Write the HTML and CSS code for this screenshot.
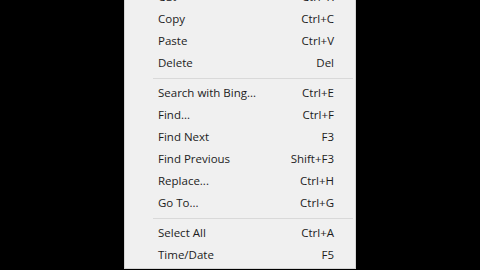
FILE: index.html
```html
<!DOCTYPE html>
<html lang="en">
<head>
    <meta charset="UTF-8">
    <title>Edit menu</title>
    <link rel="stylesheet" href="styles.css">
</head>
<body>
    <div class="menu">
        <div class="item"><span>Cut</span><span>Ctrl+X</span></div>
        <div class="item"><span>Copy</span><span>Ctrl+C</span></div>
        <div class="item"><span>Paste</span><span>Ctrl+V</span></div>
        <div class="item"><span>Delete</span><span>Del</span></div>
        <div class="sep"></div>
        <div class="item"><span>Search with Bing...</span><span>Ctrl+E</span></div>
        <div class="item"><span>Find...</span><span>Ctrl+F</span></div>
        <div class="item"><span>Find Next</span><span>F3</span></div>
        <div class="item"><span>Find Previous</span><span>Shift+F3</span></div>
        <div class="item"><span>Replace...</span><span>Ctrl+H</span></div>
        <div class="item"><span>Go To...</span><span>Ctrl+G</span></div>
        <div class="sep"></div>
        <div class="item"><span>Select All</span><span>Ctrl+A</span></div>
        <div class="item"><span>Time/Date</span><span>F5</span></div>
    </div>
</body>
</html>
```

FILE: styles.css
```css
html, body {
    margin: 0;
    height: 100%;
    background: #000;
    overflow: hidden;
}
.menu {
    width: 230px;
    margin: -14px 0 0 124px;
    padding-bottom: 2px;
    background: #f0f0f0;
    border: 1px solid #d4d4d4;
    border-top: none;
    font-family: "Open Sans", "Noto Sans", sans-serif;
    font-size: 11.5px;
    color: #1c1c1c;
}
.item {
    display: flex;
    justify-content: space-between;
    align-items: center;
    box-sizing: border-box;
    height: 22px;
    padding: 0 21px 2px 33px;
}
.sep {
    height: 1px;
    margin: 4px 2px 3px 28px;
    background: #d9d9d9;
}
```
